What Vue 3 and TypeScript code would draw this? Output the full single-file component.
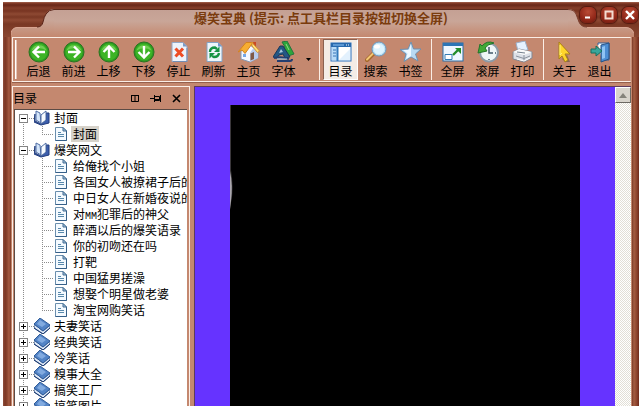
<script setup lang="ts">
import { computed, ref } from 'vue'

interface Tool {
  id: string
  label: string
}

interface Chapter {
  title: string
  pages: string[]
}

interface Row {
  key: string
  title: string
  kind: 'branch' | 'leaf'
  chapter: number
  open: boolean
  last: boolean
}

const toolGroups: Tool[][] = [
  [
    { id: 'back', label: '后退' },
    { id: 'forward', label: '前进' },
    { id: 'up', label: '上移' },
    { id: 'down', label: '下移' },
    { id: 'stop', label: '停止' },
    { id: 'refresh', label: '刷新' },
    { id: 'home', label: '主页' },
    { id: 'font', label: '字体' },
  ],
  [
    { id: 'contents', label: '目录' },
    { id: 'search', label: '搜索' },
    { id: 'bookmark', label: '书签' },
  ],
  [
    { id: 'full', label: '全屏' },
    { id: 'scroll', label: '滚屏' },
    { id: 'print', label: '打印' },
  ],
  [
    { id: 'about', label: '关于' },
    { id: 'exit', label: '退出' },
  ],
]

const arrowAngles: Record<string, number> = { back: 0, up: 90, forward: 180, down: 270 }

const chapters: Chapter[] = [
  { title: '封面', pages: ['封面'] },
  {
    title: '爆笑网文',
    pages: [
      '给俺找个小姐',
      '各国女人被撩裙子后的',
      '中日女人在新婚夜说的',
      '对MM犯罪后的神父',
      '醉酒以后的爆笑语录',
      '你的初吻还在吗',
      '打靶',
      '中国猛男搓澡',
      '想娶个明星做老婆',
      '淘宝网购笑话',
    ],
  },
  { title: '夫妻笑话', pages: [] },
  { title: '经典笑话', pages: [] },
  { title: '冷笑话', pages: [] },
  { title: '糗事大全', pages: [] },
  { title: '搞笑工厂', pages: [] },
  { title: '搞笑图片', pages: [] },
]

const opened = ref<boolean[]>(chapters.map((_, i) => i < 2))
const selected = ref('0-0')

const rows = computed<Row[]>(() => {
  const list: Row[] = []
  chapters.forEach((chapter, c) => {
    const open = opened.value[c]
    list.push({ key: `${c}`, title: chapter.title, kind: 'branch', chapter: c, open, last: false })
    if (open) {
      chapter.pages.forEach((title, p) => {
        list.push({
          key: `${c}-${p}`,
          title,
          kind: 'leaf',
          chapter: c,
          open: false,
          last: p === chapter.pages.length - 1,
        })
      })
    }
  })
  return list
})

function toggle(index: number) {
  opened.value[index] = !opened.value[index]
}

/* Splits a title so that Latin letters can take the half-width face. */
function pieces(title: string): string[] {
  return title.split(/([A-Z]+)/).filter((s) => s.length > 0)
}
</script>

<template>
  <div class="desk">
    <div class="frame">
      <header class="titlebar">
        <svg class="corner-left" width="43" height="28" viewBox="0 0 43 28" aria-hidden="true">
          <defs>
            <linearGradient id="tabL" x1="0" y1="0" x2="0" y2="28" gradientUnits="userSpaceOnUse">
              <stop offset="0" stop-color="#c4a094" />
              <stop offset=".4" stop-color="#c9a698" />
              <stop offset="1" stop-color="#c4886f" />
            </linearGradient>
          </defs>
          <path d="M0 28V24Q1 19 6 18H26Q31 18 32 13Q33 8 35 5Q38 0 43 0V28Z" fill="url(#tabL)" />
          <path d="M0 26V24Q1 19 6 18.500H26" fill="none" stroke="#d9a592" />
          <path d="M26 18Q31 18 32 13Q33 8 35 5Q38 .5 43 .5" fill="none" stroke="#5a2418" />
        </svg>
        <h1 class="title">爆笑宝典 (提示: 点工具栏目录按钮切换全屏)</h1>
        <svg class="corner-right" width="66" height="28" viewBox="0 0 66 28" aria-hidden="true">
          <defs>
            <linearGradient id="tabR" x1="0" y1="0" x2="0" y2="28" gradientUnits="userSpaceOnUse">
              <stop offset="0" stop-color="#c4a094" />
              <stop offset=".4" stop-color="#c9a698" />
              <stop offset="1" stop-color="#c4886f" />
            </linearGradient>
          </defs>
          <path d="M0 0Q6 0 8 5L11 13Q13 18 19 18H58Q65 19 66 24V28H0Z" fill="url(#tabR)" />
          <path d="M0 .5Q6 .5 8 5L11 13Q13 18 19 18" fill="none" stroke="#7c4030" />
          <path d="M19 18.500H58Q64 19 65.500 24" fill="none" stroke="#d9a592" />
        </svg>
        <div class="controls">
          <button type="button" class="control" aria-label="最小化">
            <svg width="16" height="16" viewBox="0 0 16 16"><path d="M5 10.500h5" stroke="#fff" stroke-width="2" /></svg>
          </button>
          <button type="button" class="control" aria-label="最大化">
            <svg width="16" height="16" viewBox="0 0 16 16"><rect x="4.500" y="4.500" width="7" height="7" fill="none" stroke="#f3dcd2" stroke-width="2" /></svg>
          </button>
          <button type="button" class="control" aria-label="关闭">
            <svg width="16" height="16" viewBox="0 0 16 16"><path d="M4 4l8 8M12 4l-8 8" stroke="#fff" stroke-width="2.400" /></svg>
          </button>
        </div>
      </header>

      <div class="body">
        <nav class="toolbar" aria-label="工具栏">
          <span class="grip"></span>
          <template v-for="(group, g) in toolGroups" :key="g">
            <span v-if="g > 0" class="divider"></span>
            <button
              v-for="tool in group"
              :key="tool.id"
              type="button"
              class="tool"
              :class="{ pressed: tool.id === 'contents' }"
            >
              <svg width="22" height="22" viewBox="0 0 22 22" aria-hidden="true">
                <g v-if="tool.id in arrowAngles">
                  <circle cx="11" cy="11" r="10" fill="#2c9a22" stroke="#2b7420" />
                  <circle cx="11" cy="11" r="8.500" fill="#3db426" />
                  <path d="M3.500 9.500A8 8 0 0 1 18.500 9.500Q11 5 3.500 9.500Z" fill="#8add6c" opacity=".65" />
                  <path
                    d="M17 11H6M11 5.500L5.500 11L11 16.500"
                    fill="none"
                    stroke="#fff"
                    stroke-width="2.400"
                    :transform="`rotate(${arrowAngles[tool.id]} 11 11)`"
                  />
                </g>
                <g v-else-if="tool.id === 'stop'">
                  <path d="M4 1.500H15L19 5.500V20.500H4Z" fill="#edf3fb" stroke="#94a8c6" />
                  <path d="M15 1.500V5.500H19Z" fill="#7a9ac7" />
                  <path d="M19 7V20.500H5" fill="none" stroke="#718db5" />
                  <path d="M7.500 7.500L15 15.500M15 7.500L7.500 15.500" stroke="#ed4c25" stroke-width="3" />
                </g>
                <g v-else-if="tool.id === 'refresh'">
                  <path d="M4 1.500H15L19 5.500V20.500H4Z" fill="#edf6fb" stroke="#83a4c6" />
                  <path d="M15 1.500V5.500H19Z" fill="#6d97cc" />
                  <path d="M7 11Q7 6.500 12 6.500L14 8" fill="none" stroke="#159344" stroke-width="2.400" />
                  <path d="M16.500 5.500V11H11Z" fill="#159344" />
                  <path d="M16 12Q15.500 16 11 16L9 15" fill="none" stroke="#159344" stroke-width="2.400" />
                  <path d="M6.500 17.500V12H12Z" fill="#159344" />
                </g>
                <g v-else-if="tool.id === 'home'">
                  <path d="M15 1h3v7h-3z" fill="#c94a25" />
                  <path d="M3 10L12 4L20 10V17L12 21L3 18Z" fill="#f6f8ff" stroke="#8699b4" />
                  <path d="M12 12L16 6L20 10V17L12 21Z" fill="#b9cced" />
                  <path d="M0 11L8 1.500H15L7 12.500L4 9Z" fill="#f6ad32" stroke="#d38320" />
                  <path d="M14 1.500L21.500 10L19.500 11.500L14 5Z" fill="#ffe07b" stroke="#d79130" />
                  <path d="M12.500 12.500L16 11V18L12.500 19.500Z" fill="#805a47" />
                  <path d="M5 13h3v3H5z" fill="#75a7e8" />
                </g>
                <g v-else-if="tool.id === 'font'">
                  <path d="M9 1L14 0L21 13L15 15L13 10L10 7L12 6Z" fill="#2ca63b" stroke="#277240" />
                  <path d="M13 3L16 9" stroke="#93dd83" />
                  <path d="M7 5H10L17 16L12 17L10 13L6 14L4 17L0 16Z" fill="#235784" stroke="#193759" />
                  <path d="M6 12L10 11L8 8Z" fill="#a9c8dc" />
                  <path d="M1 17Q9 15 16 18M4 20H17Q19 20 19 18" fill="none" stroke="#233e70" stroke-width="2" />
                  <path d="M4 18H14" stroke="#8fc9ed" />
                </g>
                <g v-else-if="tool.id === 'contents'">
                  <rect x="1" y="2" width="20" height="18" fill="#fff" stroke="#2b71bd" />
                  <path d="M1 2H21V6H1Z" fill="#2869ae" />
                  <path d="M3 4h11" stroke="#8fc7f8" />
                  <path d="M16 4h1M18 4h1" stroke="#fff" />
                  <path d="M2 6h5v13H2z" fill="#b7daf7" />
                  <path d="M7.500 6V20" stroke="#327abc" stroke-width="2" />
                  <path d="M3 9h3M3 12h3M3 15h3" stroke="#3975b8" />
                  <path d="M9 19L20 8V19Z" fill="#e3f1fd" />
                </g>
                <g v-else-if="tool.id === 'search'">
                  <path d="M2 19L10 11" stroke="#a5682d" stroke-width="4" stroke-linecap="round" />
                  <path d="M2 18.500L9.500 11" stroke="#f4c673" stroke-width="2" stroke-linecap="round" />
                  <circle cx="14" cy="8" r="7" fill="#bce2f5" stroke="#6c99bf" />
                  <circle cx="14" cy="8" r="5.300" fill="#ddf4ff" />
                  <ellipse cx="12" cy="5.500" rx="3" ry="2" fill="#fff" />
                </g>
                <g v-else-if="tool.id === 'bookmark'">
                  <path d="M11 1L13.500 8L21 8L15.500 13L18 20L11 16L4 20.500L6 13L0 8.500L8 8Z" fill="#b8daf3" stroke="#6f91b0" />
                  <path d="M11 3V15L6 18L7.500 12.500L3 9L9 9Z" fill="#eff9ff" />
                </g>
                <g v-else-if="tool.id === 'full'">
                  <rect x="1" y="2" width="20" height="18" fill="#eef7ff" stroke="#286eaa" />
                  <path d="M1 2H21V5H1Z" fill="#2c75b5" />
                  <path d="M3 13.500h7v5H3z" fill="#fff" stroke="#347cb4" />
                  <path d="M11 14L17 8" stroke="#228d2b" stroke-width="2.400" />
                  <path d="M13 7H19V13Z" fill="#228d2b" />
                </g>
                <g v-else-if="tool.id === 'scroll'">
                  <circle cx="12" cy="11.500" r="9" fill="#eef6f8" stroke="#8b9ba8" stroke-width="2" />
                  <path d="M12 6V12H16M12 18v1M18 12h1" fill="none" stroke="#40596a" stroke-width="1.500" />
                  <path d="M17 2Q10 -1 5 5L3 3L1 12L10 10L8 7Q11 3 17 2Z" fill="#43a936" stroke="#23762b" />
                </g>
                <g v-else-if="tool.id === 'print'">
                  <path d="M6 10L4 2L13 0L16 9Z" fill="#e6f2ff" stroke="#9bb0c9" />
                  <path d="M1 11L7 8L20 11V17L12 21L1 18Z" fill="#dce0e7" stroke="#818691" />
                  <path d="M1 11L7 8L20 11L12 14Z" fill="#fafafa" />
                  <path d="M12 14V21M4 15L12 17.500L18 15" fill="none" stroke="#8b929d" />
                  <path d="M5 11L13 12" stroke="#73808e" />
                  <path d="M5 18L12 20L18 17" fill="none" stroke="#fff" />
                </g>
                <g v-else-if="tool.id === 'about'">
                  <path d="M8 18L13 14L16 21H12Z" fill="#6b5744" opacity=".65" />
                  <path d="M5 1L16 13L11 13L14 19L11 21L8 15L5 18Z" fill="#ffd52b" stroke="#a9811a" />
                  <path d="M6 4V14L8 12" fill="none" stroke="#fff27c" />
                </g>
                <g v-else>
                  <path d="M9 4V2H20V19H13" fill="#f4faff" stroke="#315f98" />
                  <path d="M12 4L20 2V18L12 21Z" fill="#4d8ed3" stroke="#265184" />
                  <path d="M13 6L16 5V17L13 18Z" fill="#8fc4f4" />
                  <path d="M2 8H7V5L13 10L7 15V12H2Z" fill="#39a69b" stroke="#187061" />
                </g>
              </svg>
              <span class="tool-label">{{ tool.label }}</span>
            </button>
            <button v-if="g === 0" type="button" class="dropdown" aria-label="字体选项">
              <svg width="5" height="3" viewBox="0 0 5 3"><path d="M0 0h5L2.500 3z" /></svg>
            </button>
          </template>
        </nav>

        <div class="panes">
          <aside class="sidebar">
            <div class="side-head">
              <h2>目录</h2>
              <button type="button" aria-label="分栏">
                <svg width="9" height="9" viewBox="0 0 9 9"><path d="M.5 1.500h7v6h-7zM4 1.500v6M0 1.500h8" fill="none" stroke="#000" /></svg>
              </button>
              <button type="button" aria-label="固定">
                <svg width="12" height="9" viewBox="0 0 12 9"><path d="M0 4.500h4M4.500 1v7M4.500 2.500h5v4h-5M4.500 5.500h5M10.500 1v7" fill="none" stroke="#000" /></svg>
              </button>
              <button type="button" aria-label="关闭目录">
                <svg width="9" height="9" viewBox="0 0 9 9"><path d="M1 1l7 7M8 1L1 8" stroke="#000" stroke-width="1.600" /></svg>
              </button>
            </div>
            <ul class="tree">
              <li v-for="(row, i) in rows" :key="row.key" class="row" :class="[row.kind, { last: row.last, first: i === 0 }]">
                <span class="trunk">
                  <button
                    v-if="row.kind === 'branch'"
                    type="button"
                    class="toggle"
                    :aria-expanded="row.open"
                    :aria-label="row.title"
                    @click="toggle(row.chapter)"
                  >
                    <svg width="9" height="9" viewBox="0 0 9 9">
                      <rect x=".5" y=".5" width="8" height="8" fill="#fff" stroke="#848484" />
                      <path :d="row.open ? 'M2 4.500h5' : 'M2 4.500h5M4.500 2v5'" stroke="#000" />
                    </svg>
                  </button>
                </span>
                <span v-if="row.kind === 'leaf'" class="twig"></span>
                <svg v-if="row.kind === 'leaf'" class="icon-leaf" width="14" height="16" viewBox="0 0 14 16" aria-hidden="true">
                  <path d="M1.500 1.500H9L12.500 5V14.500H1.500Z" fill="#f4faff" stroke="#6a8ead" />
                  <path d="M12.500 5V14.500H1.500" fill="none" stroke="#355f88" />
                  <path d="M9 1.500V5h3.500Z" fill="#a9cbe4" stroke="#41698f" />
                  <path d="M4 6.500h3M4 8.500h6M4 10.500h6" stroke="#5989ac" />
                </svg>
                <svg v-else-if="row.open" class="icon-book" width="16" height="16" viewBox="0 0 16 16" aria-hidden="true">
                  <path d="M1 4L0 12L7 15L15 13V3L12 3V10L7 14L1 11Z" fill="#3c5ead" stroke="#203b7b" />
                  <path d="M2 1L6 3L7 13L2 10Z" fill="#d5e6fa" stroke="#4f6da4" />
                  <path d="M7 5L12 1V10L7 14Z" fill="#f7fbff" stroke="#4f6da4" />
                </svg>
                <svg v-else class="icon-book" width="16" height="16" viewBox="0 0 16 16" aria-hidden="true">
                  <path d="M0 6V10L9 16L16 10V7L9 13Z" fill="#dfe9f7" stroke="#264c84" />
                  <path d="M0 6L6 0L16 7L9 13Z" fill="#5384c6" stroke="#315d9a" />
                  <path d="M3 6L6 2L12 6L8 9Z" fill="#82abe0" />
                  <path d="M0 10L9 16L16 10" fill="none" stroke="#223f74" />
                </svg>
                <a
                  href="#"
                  class="label"
                  :class="{ chosen: selected === row.key }"
                  @click.prevent="selected = row.key"
                  ><span v-for="(piece, n) in pieces(row.title)" :key="n" :class="{ latin: /[A-Z]/.test(piece) }">{{ piece }}</span></a
                >
              </li>
            </ul>
          </aside>

          <main class="reader">
            <div class="page">
              <div class="sheet">
                <svg class="glint" width="3" height="105" viewBox="0 0 3 105" aria-hidden="true">
                  <path d="M0 0H1V65Q4 84 1 98L0 105Z" fill="#3b383c" />
                  <path d="M0 66Q3 80 1 96L0 104Z" fill="#aaa7ae" />
                </svg>
              </div>
            </div>
            <div class="scrollbar">
              <button type="button" aria-label="向上滚动">
                <svg width="8" height="5" viewBox="0 0 8 5"><path d="M4 0L8 5H0Z" fill="#85837b" /></svg>
              </button>
            </div>
          </main>
        </div>
      </div>
    </div>
  </div>
</template>

<style>
body {
  overflow: hidden;
}
</style>

<style scoped>
* {
  box-sizing: border-box;
}

.desk {
  height: 100vh;
  padding: 2px 0 0 3px;
  background: #fff;
  font-family: "Noto Sans CJK SC", sans-serif;
  font-size: 12px;
  line-height: 16px;
  color: #000;
}

button {
  margin: 0;
  padding: 0;
  border: 0;
  background: none;
  font: inherit;
  color: inherit;
}

svg {
  display: block;
  flex: none;
}

.frame {
  display: flex;
  flex-direction: column;
  height: 100%;
  padding: 0 7px 0 8px;
  background: linear-gradient(90deg, #8f5140, #7c3724 2px, #8a452f 4px, #a65c43 6px, #7c3b28 8px, #7c3b28 calc(100% - 7px), #a35d42 calc(100% - 5px), #8b412b calc(100% - 2px), #6e2a1b);
}

.titlebar {
  position: relative;
  display: flex;
  flex: none;
  height: 35px;
  margin: 0 -7px 0 -8px;
  padding: 7px 5px 0 8px;
  background: linear-gradient(#a66a57, #873f2b 1px, #692819 3px, #843e2a 6px, #783522 9px, #8e4933 12px, #7a3824 15px, #8e4933 18px, #7a3824 22px, #8a4731);
}

.title {
  flex: 1;
  margin: 0;
  padding: 0 0 11px 20px;
  border-top: 1px solid #5e2b1d;
  background: linear-gradient(#c4a094, #c9a698 11px, #c4886f 27px);
  font-size: 13px;
  line-height: 16px;
  font-weight: 700;
  color: #7a3b0d;
  text-align: center;
  white-space: pre;
}

.controls {
  position: absolute;
  top: 5px;
  right: 1px;
  display: flex;
  gap: 5px;
}

.control {
  width: 16px;
  height: 16px;
  border-radius: 6px;
  background: radial-gradient(circle at 50% 30%, #b94b35, #922819 60%, #65190f);
  box-shadow: 0 0 1px 1px #54190f;
}

.body {
  display: flex;
  flex: 1;
  flex-direction: column;
  min-height: 0;
  padding: 0 1px;
  gap: 4px;
  background: #c4886f;
}

.toolbar {
  display: flex;
  flex: none;
  height: 45px;
  padding: 1px 0;
  border: 1px solid #fbeee6;
  border-right-color: #d0a18d;
  box-shadow: 0 1px #96604c;
}

.grip {
  width: 2px;
  margin: 1px 4px 1px 2px;
  background: #fff;
  border-right: 1px solid #e6c4b4;
}

.tool {
  display: flex;
  flex-direction: column;
  align-items: center;
  flex: none;
  width: 35px;
  padding-top: 2px;
}

.pressed {
  padding-top: 1px;
  border: 1px solid #fff;
  border-top-color: #8b6150;
  border-left-color: #8b6150;
  background: #f4ece6;
}

.tool-label {
  line-height: 16px;
}

.dropdown {
  display: flex;
  align-items: center;
  justify-content: center;
  width: 15px;
}

.divider {
  flex: none;
  width: 7px;
  padding: 0 3px;
  background: #fbeee6 content-box;
}

.panes {
  display: flex;
  flex: 1;
  min-height: 0;
  gap: 4px;
}

.sidebar {
  display: flex;
  flex: none;
  flex-direction: column;
  width: 178px;
  border: 1px solid #fbeee6;
  border-bottom: 0;
}

.side-head {
  display: flex;
  align-items: center;
  flex: none;
  height: 22px;
  padding: 0 8px 0 0;
  gap: 10px;
}

.side-head h2 {
  flex: 1;
  margin: 0;
  font-size: 12px;
  line-height: 16px;
  font-weight: 400;
}

.tree {
  flex: 1;
  min-height: 0;
  margin: 0 2px 0 1px;
  padding: 0;
  border-top: 1px solid #5b4b45;
  border-left: 1px solid #5b4b45;
  background: #fff;
  list-style: none;
  overflow: hidden;
}

.row {
  display: flex;
  align-items: center;
  height: 16px;
  white-space: nowrap;
}

.trunk {
  display: flex;
  align-items: center;
  align-self: stretch;
  flex: none;
  width: 19px;
  padding-left: 4px;
  background:
    repeating-linear-gradient(#8c8c8c 0 1px, transparent 1px 2px) 8px 0 / 1px 100% no-repeat,
    repeating-linear-gradient(90deg, #8c8c8c 0 1px, transparent 1px 2px) 10px 8px / 9px 1px no-repeat;
}

.leaf .trunk {
  background: repeating-linear-gradient(#8c8c8c 0 1px, transparent 1px 2px) 8px 0 / 1px 100% no-repeat;
}

.first .trunk {
  background-position: 8px 8px, 10px 8px;
}

.twig {
  align-self: stretch;
  flex: none;
  width: 20px;
  background:
    repeating-linear-gradient(#8c8c8c 0 1px, transparent 1px 2px) 8px 0 / 1px 100% no-repeat,
    repeating-linear-gradient(90deg, #8c8c8c 0 1px, transparent 1px 2px) 8px 8px / 12px 1px no-repeat;
}

.last .twig {
  background-size: 1px 8px, 12px 1px;
}

.icon-leaf {
  margin-right: 3px;
}

.icon-book {
  margin-right: 2px;
}

.label {
  height: 16px;
  padding: 0 2px;
  color: #000;
  text-decoration: none;
}

.chosen {
  background: #d6d2ca;
}

.latin {
  font-family: "Liberation Mono", monospace;
  font-size: 10px;
  line-height: 8px;
}

.reader {
  display: flex;
  flex: 1;
  min-width: 0;
  border-top: 1px solid #5e3a5c;
  border-left: 1px solid #5e3a5c;
}

.page {
  flex: 1;
  min-width: 0;
  padding: 18px 35px 0;
  background: #6633ff;
}

.sheet {
  height: 100%;
  background: #000;
}

.scrollbar {
  flex: none;
  width: 16px;
  background: repeating-conic-gradient(#fff 0 25%, #e2dfd6 0 50%) 0 0 / 2px 2px;
}

.scrollbar button {
  display: flex;
  align-items: center;
  justify-content: center;
  width: 16px;
  height: 16px;
  border: 1px solid;
  border-color: #fff #6b6862 #6b6862 #fff;
  background: #d8d4cc;
}
</style>
